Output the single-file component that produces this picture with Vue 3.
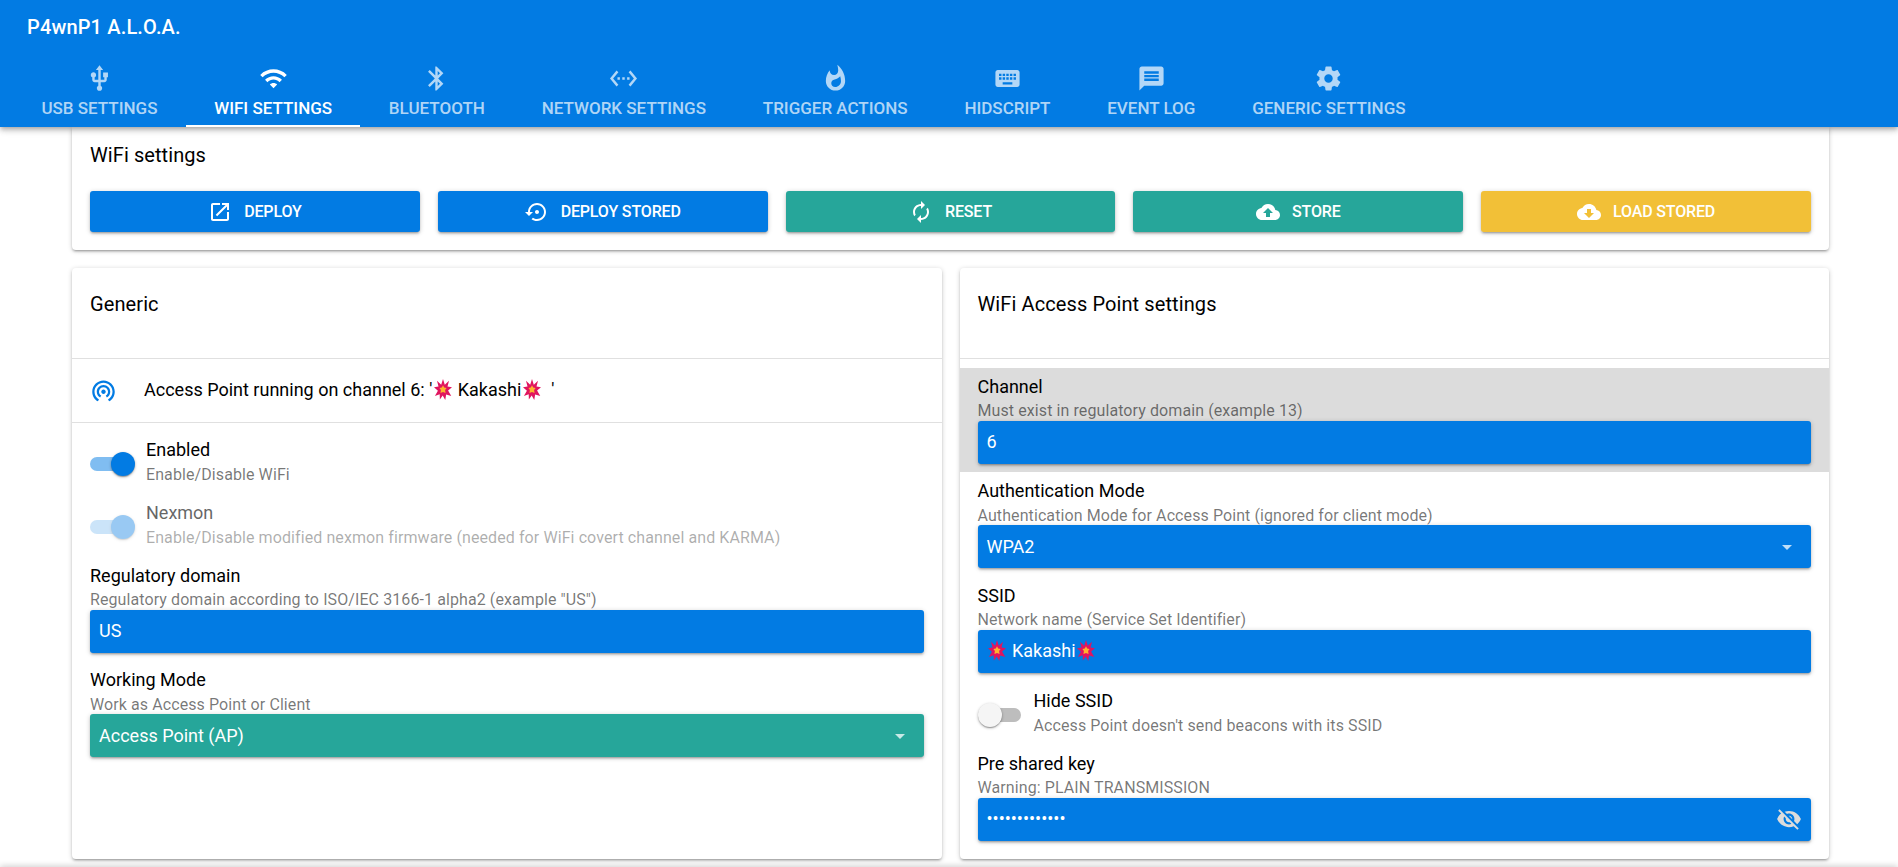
<script setup>
const tabs = [
  { label: 'USB Settings', d: 'M15 7v4h1v2h-3V5h2l-3-4-3 4h2v8H8v-2.07c.7-.37 1.2-1.08 1.2-1.93 0-1.21-.99-2.2-2.2-2.2-1.21 0-2.2.99-2.2 2.2 0 .85.5 1.56 1.2 1.93V13c0 1.11.89 2 2 2h3v3.05c-.71.37-1.2 1.1-1.2 1.95 0 1.22.99 2.2 2.2 2.2 1.21 0 2.2-.98 2.2-2.2 0-.85-.49-1.58-1.2-1.95V15h3c1.11 0 2-.89 2-2v-2h1V7h-4z' },
  { label: 'WiFi Settings', active: true, d: 'M1 9l2 2c4.97-4.97 13.03-4.97 18 0l2-2C16.93 2.93 7.08 2.93 1 9zm8 8l3 3 3-3c-1.65-1.66-4.34-1.66-6 0zm-4-4l2 2c2.76-2.76 7.24-2.76 10 0l2-2C15.14 9.14 8.87 9.14 5 13z' },
  { label: 'Bluetooth', d: 'M17.71 7.71L12 2h-1v7.59L6.41 5 5 6.41 10.59 12 5 17.59 6.41 19 11 14.41V22h1l5.71-5.71-4.3-4.29 4.3-4.29zM13 5.83l1.88 1.88L13 9.59V5.83zm1.88 10.46L13 18.17v-3.76l1.88 1.88z' },
  { label: 'Network Settings', d: 'M7.77 6.76L6.23 5.48.82 12l5.41 6.52 1.54-1.28L3.42 12l4.35-5.24zM7 13h2v-2H7v2zm10-2h-2v2h2v-2zm-6 2h2v-2h-2v2zm6.77-7.52l-1.54 1.28L20.58 12l-4.35 5.24 1.54 1.28L23.18 12l-5.41-6.52z' },
  { label: 'Trigger Actions', d: 'M13.5.67s.74 2.65.74 4.8c0 2.06-1.35 3.73-3.41 3.73-2.07 0-3.63-1.67-3.63-3.73l.03-.36C5.21 7.51 4 10.62 4 14c0 4.42 3.58 8 8 8s8-3.58 8-8C20 8.61 17.41 3.8 13.5.67zM11.71 19c-1.78 0-3.22-1.4-3.22-3.14 0-1.62 1.05-2.76 2.81-3.12 1.77-.36 3.6-1.21 4.62-2.58.39 1.29.59 2.65.59 4.04 0 2.65-2.15 4.8-4.8 4.8z' },
  { label: 'HIDScript', d: 'M20 5H4c-1.1 0-1.99.9-1.99 2L2 17c0 1.1.9 2 2 2h16c1.1 0 2-.9 2-2V7c0-1.1-.9-2-2-2zm-9 3h2v2h-2V8zm0 3h2v2h-2v-2zM8 8h2v2H8V8zm0 3h2v2H8v-2zm-1 2H5v-2h2v2zm0-3H5V8h2v2zm9 7H8v-2h8v2zm0-4h-2v-2h2v2zm0-3h-2V8h2v2zm3 3h-2v-2h2v2zm0-3h-2V8h2v2z' },
  { label: 'Event Log', d: 'M20 2H4c-1.1 0-1.99.9-1.99 2L2 22l4-4h14c1.1 0 2-.9 2-2V4c0-1.1-.9-2-2-2zm-2 12H6v-2h12v2zm0-3H6V9h12v2zm0-3H6V6h12v2z' },
  { label: 'Generic Settings', d: 'M19.43 12.98c.04-.32.07-.64.07-.98s-.03-.66-.07-.98l2.11-1.65c.19-.15.24-.42.12-.64l-2-3.46c-.12-.22-.39-.3-.61-.22l-2.49 1c-.52-.4-1.08-.73-1.69-.98l-.38-2.65C14.46 2.18 14.25 2 14 2h-4c-.25 0-.46.18-.49.42l-.38 2.65c-.61.25-1.17.59-1.69.98l-2.49-1c-.23-.09-.49 0-.61.22l-2 3.46c-.13.22-.07.49.12.64l2.11 1.65c-.04.32-.07.65-.07.98s.03.66.07.98l-2.11 1.65c-.19.15-.24.42-.12.64l2 3.46c.12.22.39.3.61.22l2.49-1c.52.4 1.08.73 1.69.98l.38 2.65c.03.24.24.42.49.42h4c.25 0 .46-.18.49-.42l.38-2.65c.61-.25 1.17-.59 1.69-.98l2.49 1c.23.09.49 0 .61-.22l2-3.46c.12-.22.07-.49-.12-.64l-2.11-1.65zM12 15.5c-1.93 0-3.5-1.57-3.5-3.5s1.57-3.5 3.5-3.5 3.5 1.57 3.5 3.5-1.57 3.5-3.5 3.5z' }
]
const buttons = [
  { label: 'Deploy', color: 'primary', d: 'M19 19H5V5h7V3H5c-1.11 0-2 .9-2 2v14c0 1.1.89 2 2 2h14c1.1 0 2-.9 2-2v-7h-2v7zM14 3v2h3.59l-9.83 9.83 1.41 1.41L19 6.41V10h2V3h-7z' },
  { label: 'Deploy Stored', color: 'primary', d: 'M14 12c0-1.1-.9-2-2-2s-2 .9-2 2 .9 2 2 2 2-.9 2-2zm-2-9c-4.97 0-9 4.03-9 9H0l4 4 4-4H5c0-3.87 3.13-7 7-7s7 3.13 7 7-3.13 7-7 7c-1.51 0-2.91-.49-4.06-1.3l-1.42 1.44C8.04 20.3 9.94 21 12 21c4.97 0 9-4.03 9-9s-4.03-9-9-9z' },
  { label: 'Reset', color: 'teal', d: 'M12 6v3l4-4-4-4v3c-4.42 0-8 3.58-8 8 0 1.57.46 3.03 1.24 4.26L6.7 14.8c-.45-.83-.7-1.79-.7-2.8 0-3.31 2.69-6 6-6zm6.76 1.74L17.3 9.2c.44.84.7 1.79.7 2.8 0 3.31-2.69 6-6 6v-3l-4 4 4 4v-3c4.42 0 8-3.58 8-8 0-1.57-.46-3.03-1.24-4.26z' },
  { label: 'Store', color: 'teal', d: 'M19.35 10.04C18.67 6.59 15.64 4 12 4 9.11 4 6.6 5.64 5.35 8.04 2.34 8.36 0 10.91 0 14c0 3.31 2.69 6 6 6h13c2.76 0 5-2.24 5-5 0-2.64-2.05-4.78-4.65-4.96zM14 13v4h-4v-4H7l5-5 5 5h-3z' },
  { label: 'Load Stored', color: 'amber', d: 'M19.35 10.04C18.67 6.59 15.64 4 12 4 9.11 4 6.6 5.64 5.35 8.04 2.34 8.36 0 10.91 0 14c0 3.31 2.69 6 6 6h13c2.76 0 5-2.24 5-5 0-2.64-2.05-4.78-4.65-4.96zM17 13l-5 5-5-5h3V9h4v4h3z' }
]
const tethering = 'M12 11c-1.1 0-2 .9-2 2s.9 2 2 2 2-.9 2-2-.9-2-2-2zm6 2c0-3.31-2.69-6-6-6s-6 2.69-6 6c0 2.22 1.21 4.15 3 5.19l1-1.74c-1.19-.7-2-1.97-2-3.45 0-2.21 1.79-4 4-4s4 1.79 4 4c0 1.48-.81 2.75-2 3.45l1 1.74c1.79-1.04 3-2.97 3-5.19zM12 3C6.48 3 2 7.48 2 13c0 3.7 2.01 6.92 4.99 8.65l1-1.73C5.61 18.53 4 15.96 4 13c0-4.42 3.58-8 8-8s8 3.58 8 8c0 2.96-1.61 5.53-4 6.92l1 1.73c2.99-1.73 5-4.95 5-8.65 0-5.52-4.48-10-10-10z'
const eyeOff = 'M12 7c2.76 0 5 2.24 5 5 0 .65-.13 1.26-.36 1.83l2.92 2.92c1.51-1.26 2.7-2.89 3.43-4.75-1.73-4.39-6-7.5-11-7.5-1.4 0-2.74.25-3.98.7l2.16 2.16C10.74 7.13 11.35 7 12 7zM2 4.27l2.28 2.28.46.46C3.08 8.3 1.78 10.02 1 12c1.73 4.39 6 7.5 11 7.5 1.55 0 3.03-.3 4.38-.84l.42.42L19.73 22 21 20.73 3.27 3 2 4.27zM7.53 9.8l1.55 1.55c-.05.21-.08.43-.08.65 0 1.66 1.34 3 3 3 .22 0 .44-.03.65-.08l1.55 1.55c-.67.33-1.41.53-2.2.53-2.76 0-5-2.24-5-5 0-.79.2-1.53.53-2.2zm4.31-.78l3.15 3.15.02-.16c0-1.66-1.34-3-3-3l-.17.01z'
const burstOuter = '12,0 14.4,6.5 20,2 18,8.5 24,9.5 18.8,13.2 23,19.5 16.2,17.6 15,24 11.6,18.8 7.8,23.5 7.6,17.4 1.2,19.5 5.2,13.4 0,9.5 6,8.5 4,2 9.6,6.5'
const burstInner = '12,7 13.6,9.8 16.8,10.2 14.8,12.6 15.4,16 12,14.8 8.6,16 9.2,12.6 7.2,10.2 10.4,9.8'
</script>

<template>
  <div class="page">
    <header class="header">
      <div class="title">P4wnP1 A.L.O.A.</div>
      <nav class="tabs">
        <div v-for="t in tabs" :key="t.label" class="tab" :class="{ active: t.active }">
          <svg class="tab-icon" viewBox="0 0 24 24"><path :d="t.d" /></svg>
          <span class="tab-label">{{ t.label }}</span>
        </div>
      </nav>
    </header>

    <main class="main">
      <section class="card top-card">
        <div class="top-title">WiFi settings</div>
        <div class="btn-row">
          <div v-for="b in buttons" :key="b.label" class="btn" :class="b.color">
            <svg class="btn-icon" viewBox="0 0 24 24"><path :d="b.d" /></svg>
            <span>{{ b.label }}</span>
          </div>
        </div>
      </section>

      <div class="columns">
        <section class="card">
          <div class="card-head">Generic</div>
          <div class="status">
            <svg class="status-icon" viewBox="0 0 24 24"><path :d="tethering" /></svg>
            <span class="status-text">Access Point running on channel 6: '<svg class="burst" viewBox="0 0 24 24" preserveAspectRatio="none"><polygon class="b1" :points="burstOuter" /><polygon class="b2" :points="burstInner" /></svg> Kakashi<svg class="burst" viewBox="0 0 24 24" preserveAspectRatio="none"><polygon class="b1" :points="burstOuter" /><polygon class="b2" :points="burstInner" /></svg>&nbsp; '</span>
          </div>
          <div class="body left-body">
            <div class="toggle-row">
              <div class="toggle on"><i class="track"></i><i class="thumb"></i></div>
              <div class="texts">
                <div class="label">Enabled</div>
                <div class="sub">Enable/Disable WiFi</div>
              </div>
            </div>
            <div class="toggle-row disabled">
              <div class="toggle on"><i class="track"></i><i class="thumb"></i></div>
              <div class="texts">
                <div class="label">Nexmon</div>
                <div class="sub">Enable/Disable modified nexmon firmware (needed for WiFi covert channel and KARMA)</div>
              </div>
            </div>
            <div class="field">
              <div class="label">Regulatory domain</div>
              <div class="sub">Regulatory domain according to ISO/IEC 3166-1 alpha2 (example "US")</div>
              <div class="input primary">US</div>
            </div>
            <div class="field">
              <div class="label">Working Mode</div>
              <div class="sub">Work as Access Point or Client</div>
              <div class="input teal">Access Point (AP)
                <svg class="input-icon caret" viewBox="0 0 24 24"><path d="M7 10l5 5 5-5z" /></svg>
              </div>
            </div>
          </div>
        </section>

        <section class="card">
          <div class="card-head">WiFi Access Point settings</div>
          <div class="body">
            <div class="field hl">
              <div class="label">Channel</div>
              <div class="sub">Must exist in regulatory domain (example 13)</div>
              <div class="input primary">6</div>
            </div>
            <div class="field">
              <div class="label">Authentication Mode</div>
              <div class="sub">Authentication Mode for Access Point (ignored for client mode)</div>
              <div class="input primary">WPA2
                <svg class="input-icon caret" viewBox="0 0 24 24"><path d="M7 10l5 5 5-5z" /></svg>
              </div>
            </div>
            <div class="field">
              <div class="label">SSID</div>
              <div class="sub">Network name (Service Set Identifier)</div>
              <div class="input primary"><svg class="burst" viewBox="0 0 24 24" preserveAspectRatio="none"><polygon class="b1" :points="burstOuter" /><polygon class="b2" :points="burstInner" /></svg>&nbsp;Kakashi<svg class="burst" viewBox="0 0 24 24" preserveAspectRatio="none"><polygon class="b1" :points="burstOuter" /><polygon class="b2" :points="burstInner" /></svg></div>
            </div>
            <div class="toggle-row">
              <div class="toggle"><i class="track"></i><i class="thumb"></i></div>
              <div class="texts">
                <div class="label">Hide SSID</div>
                <div class="sub">Access Point doesn't send beacons with its SSID</div>
              </div>
            </div>
            <div class="field last">
              <div class="label">Pre shared key</div>
              <div class="sub">Warning: PLAIN TRANSMISSION</div>
              <div class="input primary"><span class="dots">•••••••••••••</span>
                <svg class="input-icon eye" viewBox="0 0 24 24"><path :d="eyeOff" /></svg>
              </div>
            </div>
          </div>
        </section>
      </div>
    </main>
    <div class="edge"></div>
  </div>
</template>

<style>
html, body { margin: 0; background: #fff; overflow: hidden; }
</style>

<style scoped>
.page { height: 867px; overflow: hidden; position: relative; font-family: Roboto, "Liberation Sans", sans-serif; color: #000; background: #fff; }
.header { height: 127px; background: #027be3; color: #fff; position: relative; z-index: 2; box-shadow: 0 2px 4px -1px rgba(0,0,0,.2), 0 4px 5px rgba(0,0,0,.14), 0 1px 10px rgba(0,0,0,.12); display: flex; flex-direction: column; }
.title { height: 54px; line-height: 54px; padding-left: 27px; font-size: 20px; font-weight: 500; letter-spacing: .15px; }
.tabs { display: flex; padding-left: 13px; flex: 1; }
.tab { position: relative; padding: 0 28.4px; display: flex; flex-direction: column; align-items: center; color: rgba(255,255,255,.7); }
.tab.active { color: #fff; }
.tab.active::after { content: ""; position: absolute; left: 0; right: 0; bottom: 0; height: 2px; background: #fff; }
.tab-icon { width: 29px; height: 29px; fill: currentColor; margin-top: 10px; }
.tab-label { font-size: 17px; font-weight: 500; text-transform: uppercase; line-height: 20px; margin-top: 5px; white-space: nowrap; }

.main { padding: 0 69px 0 72px; }
.card { background: #fff; border-radius: 4px; box-shadow: 0 1px 5px rgba(0,0,0,.2), 0 2px 2px rgba(0,0,0,.14), 0 3px 1px -2px rgba(0,0,0,.12); }
.top-card { padding: 17px 18px 18px; height: 123px; box-sizing: border-box; border-radius: 0 0 4px 4px; }
.top-title { font-size: 20px; line-height: 22px; letter-spacing: .08px; }
.btn-row { margin-top: 25px; display: grid; grid-template-columns: repeat(5, 1fr); gap: 18px; }
.btn { height: 41px; border-radius: 3px; display: flex; align-items: center; justify-content: center; gap: 12px; color: #fff; font-size: 16px; font-weight: 500; letter-spacing: -.15px; text-transform: uppercase; box-shadow: 0 1px 5px rgba(0,0,0,.2), 0 2px 2px rgba(0,0,0,.14), 0 3px 1px -2px rgba(0,0,0,.12); }
.btn-icon { width: 24px; height: 24px; fill: currentColor; }
.primary { background: #027be3; }
.teal { background: #26a69a; }
.amber { background: #f2c037; }

.columns { margin-top: 18px; display: grid; grid-template-columns: 1fr 1fr; gap: 18px; }
.card-head { height: 91px; box-sizing: border-box; padding-top: 25px; padding-left: 18px; font-size: 20px; line-height: 22px; letter-spacing: .1px; border-bottom: 1px solid #e0e0e0; }
.status { height: 64px; box-sizing: border-box; display: flex; align-items: center; padding-left: 18px; border-bottom: 1px solid #e0e0e0; }
.status-icon { width: 27px; height: 27px; fill: #027be3; flex: none; }
.status-text { margin-left: 27px; margin-bottom: 2px; font-size: 18px; display: flex; align-items: center; white-space: pre; }
.body { padding-top: 9px; padding-bottom: 18.5px; }
.left-body { padding-top: 8px; }
.toggle-row { height: 63px; box-sizing: border-box; padding: 7px 18px 0; display: flex; align-items: flex-start; }
.toggle { position: relative; width: 45px; height: 47px; flex: none; margin-right: 11px; }
.track { position: absolute; left: 0; right: 2px; top: 19px; height: 14px; border-radius: 7px; background: #bdbdbd; }
.toggle.on .track { background: rgba(2,123,227,.5); }
.thumb { position: absolute; left: 0; top: 14px; width: 24px; height: 24px; border-radius: 50%; background: #f5f5f5; box-shadow: 0 1px 3px rgba(0,0,0,.3), 0 1px 1px rgba(0,0,0,.14), 0 2px 1px -1px rgba(0,0,0,.12); }
.toggle.on .thumb { left: 21px; background: #027be3; }
.disabled .toggle { opacity: .4; }
.disabled .texts { opacity: .6; }
.label { font-size: 18px; line-height: 24px; }
.sub { font-size: 16px; line-height: 20px; margin-top: 2.5px; margin-bottom: -.5px; letter-spacing: .09px; color: rgba(0,0,0,.54); white-space: nowrap; }
.field { padding: 6.5px 18px 8px; margin-bottom: 1.2px; }
.field.last { padding-bottom: 0; margin-bottom: 0; }
.hl { background: #dcdcdc; }
.input { position: relative; height: 43px; box-sizing: border-box; padding: 0 0 1px 9px; border-radius: 3px; color: #fff; font-size: 18px; display: flex; align-items: center; box-shadow: 0 1px 5px rgba(0,0,0,.2), 0 2px 2px rgba(0,0,0,.14), 0 3px 1px -2px rgba(0,0,0,.12); }
.input-icon { position: absolute; top: 50%; transform: translateY(-50%); }
.caret { width: 24px; height: 24px; right: 12px; fill: rgba(255,255,255,.75); }
.eye { width: 26px; height: 26px; right: 9px; fill: #dcdcdc; }
.burst { width: 18px; height: 21px; flex: none; margin: 0 1.5px; }
.b1 { fill: #e0155f; }
.b2 { fill: #ffb22e; }
.dots { font-size: 18px; }
.edge { position: absolute; left: 0; right: 0; bottom: -3px; height: 3px; background: #fff; box-shadow: 0 0 6px rgba(0,0,0,.35); z-index: 3; }
</style>
